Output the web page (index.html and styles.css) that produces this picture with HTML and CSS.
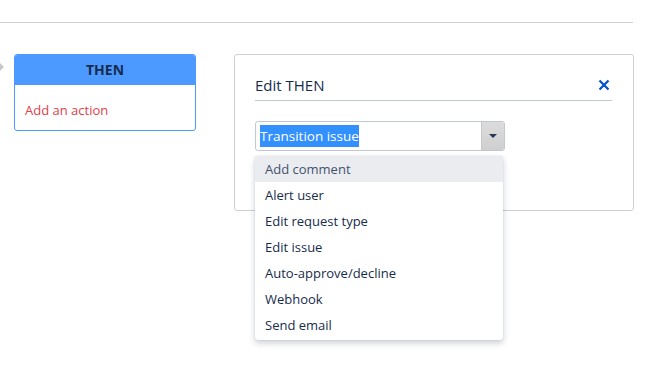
FILE: index.html
```html
<!DOCTYPE html>
<html lang="en">
<head>
  <meta charset="UTF-8" />
  <title>Automation rule</title>
  <link rel="stylesheet" href="styles.css">
</head>
<body>
  <div class="topbar"></div>

  <div class="canvas">
    <div class="connector"></div>

    <div class="rule-card">
      <div class="rule-head">THEN</div>
      <div class="rule-body">Add an action</div>
    </div>

    <div class="edit-panel">
      <div class="edit-head">
        <span>Edit THEN</span>
        <svg class="close" width="12" height="12" viewBox="0 0 12 12">
          <path d="M1.5 1.5 L10.5 10.5 M10.5 1.5 L1.5 10.5" stroke="#0052cc" stroke-width="2.2" fill="none"/>
        </svg>
      </div>

      <div class="select-wrap">
        <div class="select">
          <div class="select-value"><span class="picked">Transition issue</span></div>
          <div class="select-btn"><span class="caret"></span></div>
        </div>

        <ul class="menu">
          <li class="active">Add comment</li>
          <li>Alert user</li>
          <li>Edit request type</li>
          <li>Edit issue</li>
          <li>Auto-approve/decline</li>
          <li>Webhook</li>
          <li>Send email</li>
        </ul>
      </div>
    </div>
  </div>
</body>
</html>
```

FILE: styles.css
```css
* {
  box-sizing: border-box;
}
html, body {
  min-height: 100vh;
}
body {
  margin: 0;
  font-family: "Open Sans", "Noto Sans", sans-serif;
  font-size: 13px;
  color: #172b4d;
  background: #fff;
}
.topbar {
  width: 633px;
  height: 23px;
  border-bottom: 1px solid #cfcfcf;
}
.canvas {
  display: flex;
  align-items: flex-start;
  padding-top: 31px;
}
.connector {
  width: 0;
  height: 0;
  margin-top: 9px;
  margin-right: 10px;
  border-top: 4px solid transparent;
  border-bottom: 4px solid transparent;
  border-left: 4px solid #c8c8c8;
}
.rule-card {
  width: 182px;
  border: 1px solid #4c9aff;
  border-radius: 3px;
  overflow: hidden;
}
.rule-head {
  background: #4c9aff;
  height: 30px;
  line-height: 30px;
  text-align: center;
  font-size: 14px;
  font-weight: bold;
  color: #172b4d;
}
.rule-body {
  height: 45px;
  line-height: 50px;
  padding-left: 10px;
  color: #e2404a;
}
.edit-panel {
  width: 400px;
  height: 157px;
  margin-left: 38px;
  padding: 15px 21px 0 20px;
  border: 1px solid #cfcfcf;
  border-radius: 3px;
}
.edit-head {
  display: flex;
  justify-content: space-between;
  align-items: center;
  height: 31px;
  padding-right: 2px;
  border-bottom: 1px solid #c1c7d0;
  font-size: 15px;
}
.close {
  margin-top: -1px;
}
.select-wrap {
  position: relative;
  margin-top: 20px;
}
.select {
  display: flex;
  width: 250px;
  height: 30px;
  border: 1px solid #c1c7d0;
  border-radius: 3px;
  overflow: hidden;
}
.select-value {
  flex: 1;
  padding-left: 4px;
  line-height: 28px;
  font-size: 13.5px;
}
.picked {
  background: #3390ff;
  color: #fff;
  padding: 2px 0;
}
.select-btn {
  width: 23px;
  display: flex;
  align-items: center;
  justify-content: center;
  background: linear-gradient(#dcdcdc, #cfcfcf);
  border-left: 1px solid #c9c9c9;
}
.caret {
  width: 0;
  height: 0;
  border-left: 4px solid transparent;
  border-right: 4px solid transparent;
  border-top: 4px solid #253858;
}
.menu {
  position: absolute;
  top: 35px;
  left: 0;
  width: 248px;
  margin: 0;
  padding: 0 0 2px;
  list-style: none;
  background: #fff;
  border-radius: 3px;
  box-shadow: 0 3px 6px rgba(9, 30, 66, 0.22), 0 0 1px rgba(9, 30, 66, 0.2);
  z-index: 2;
}
.menu li {
  height: 26px;
  line-height: 26px;
  padding-left: 10px;
}
.menu li.active {
  background: #ebecf0;
  color: #42526e;
}
```
